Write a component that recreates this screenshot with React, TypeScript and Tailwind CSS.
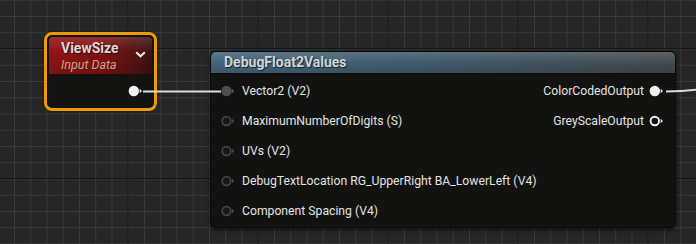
import React from 'react'

const font = { fontFamily: 'Roboto, "Open Sans", sans-serif' }

function InPin({ filled }: { filled?: boolean }) {
    return (
        <svg width="14" height="12" viewBox="0 0 14 12" className="shrink-0">
            <circle cx="5.5" cy="6" r="4.3" fill={filled ? '#4e4e4e' : '#171717'} stroke={filled ? '#4e4e4e' : '#444444'} strokeWidth="1.8" />
            <path d="M11 3.8 L13.2 6 L11 8.2 Z" fill={filled ? '#5a5a5a' : '#474747'} />
        </svg>
    )
}

function OutPin({ filled }: { filled?: boolean }) {
    return (
        <svg width="15" height="12" viewBox="0 0 15 12" className="shrink-0">
            <circle cx="5.8" cy="6" r={filled ? 5.2 : 4.2} fill={filled ? '#f2f2f2' : '#121311'} stroke="#f2f2f2" strokeWidth={filled ? 0 : 1.9} />
            <path d="M11.6 3.8 L14 6 L11.6 8.2 Z" fill="#e8e8e8" />
        </svg>
    )
}

const inputs = [
    { label: 'Vector2 (V2)', filled: true, out: 'ColorCodedOutput', outFilled: true },
    { label: 'MaximumNumberOfDigits (S)', out: 'GreyScaleOutput' },
    { label: 'UVs (V2)' },
    { label: 'DebugTextLocation RG_UpperRight BA_LowerLeft (V4)' },
    { label: 'Component Spacing (V4)' },
]

export default function App() {
    return (
        <div
            className="relative w-[696px] h-[244px] overflow-hidden bg-[#262626] bg-[linear-gradient(to_right,#151515_1.5px,transparent_1.5px),linear-gradient(to_bottom,#151515_1.5px,transparent_1.5px),linear-gradient(to_right,#3a3a3a_1.2px,transparent_1.2px),linear-gradient(to_bottom,#3a3a3a_1.2px,transparent_1.2px)] bg-[length:130px_130px,130px_130px,16.25px_16.25px,16.25px_16.25px] bg-[position:127.5px_48px,127.5px_48px,14px_16px,14px_16px]"
            style={font}
        >
            {/* ViewSize node, selected */}
            <div className="absolute left-[44px] top-[32px] w-[113px] h-[79px] rounded-[8px] border-[3px] border-[#ec9c00] bg-[#111] p-[2px] shadow-[0_0_2px_rgba(0,0,0,0.8)]">
                <div className="flex h-full flex-col overflow-hidden rounded-[4px] bg-[#131412]">
                    <div className="relative h-[37px] bg-[linear-gradient(to_bottom,rgba(255,255,255,0.12),transparent_40%,rgba(0,0,0,0.15)),linear-gradient(to_right,#931414,#801212_55%,#3c1313)] pl-[12px] pt-[3px]">
                        <div className="text-[14px] font-bold leading-[17px] text-[#d8d8d8] [text-shadow:1px_1px_1px_rgba(0,0,0,0.7)]">ViewSize</div>
                        <div className="text-[12.5px] italic leading-[15px] text-[#c9a08f]">Input Data</div>
                        <svg width="11" height="7" viewBox="0 0 11 7" className="absolute right-[6px] top-[14px]">
                            <path d="M1.2 1.2 L5.5 5.3 L9.8 1.2" fill="none" stroke="#ececec" strokeWidth="2" />
                        </svg>
                    </div>
                    <div className="flex flex-1 items-center justify-end pr-[9px] pt-[2px]">
                        <OutPin filled />
                    </div>
                </div>
            </div>

            {/* DebugFloat2Values node */}
            <div className="absolute left-[210px] top-[51px] w-[466px] h-[177px] rounded-[6px] border border-[#0a0a0a] bg-[#121311] shadow-[0_2px_4px_rgba(0,0,0,0.6)] overflow-hidden">
                <div className="h-[22px] border-b border-[#0c0c0c] bg-[linear-gradient(to_bottom,rgba(255,255,255,0.14),transparent_55%,rgba(0,0,0,0.12)),linear-gradient(to_right,#42637a,#3f596b_45%,#41484d)] pl-[13px]">
                    <div className="text-[14px] font-bold leading-[21px] text-[#cfd3d6] [text-shadow:1px_1px_1px_rgba(0,0,0,0.6)]">DebugFloat2Values</div>
                </div>
                <div className="flex flex-col pt-[2px]">
                    {inputs.map((row) => (
                        <div key={row.label} className="flex h-[30px] items-center pl-[10px] pr-[11px]">
                            <InPin filled={row.filled} />
                            <span className="ml-[7px] text-[12.2px] text-[#e2e2e2]">{row.label}</span>
                            {row.out && (
                                <div className="ml-auto flex items-center gap-[5px]">
                                    <span className="text-[12.2px] text-[#e2e2e2]">{row.out}</span>
                                    <OutPin filled={row.outFilled} />
                                </div>
                            )}
                        </div>
                    ))}
                </div>
            </div>

            {/* wires */}
            <svg className="pointer-events-none absolute left-0 top-0" width="696" height="244">
                <path d="M143 91.5 L221 91.5" stroke="#dcdcdc" strokeWidth="2" fill="none" />
                <path d="M666 91.5 C 680 91.5, 686 91, 696 89.8" stroke="#dcdcdc" strokeWidth="2" fill="none" />
            </svg>
        </div>
    )
}
